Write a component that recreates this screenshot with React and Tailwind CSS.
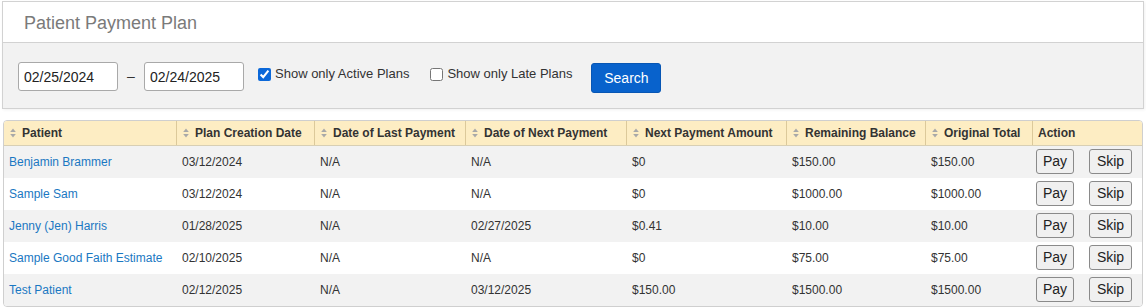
import { useState } from "react";

const rows = [
  { name: "Benjamin Brammer", created: "03/12/2024", last: "N/A", next: "N/A", amount: "$0", remaining: "$150.00", total: "$150.00" },
  { name: "Sample Sam", created: "03/12/2024", last: "N/A", next: "N/A", amount: "$0", remaining: "$1000.00", total: "$1000.00" },
  { name: "Jenny (Jen) Harris", created: "01/28/2025", last: "N/A", next: "02/27/2025", amount: "$0.41", remaining: "$10.00", total: "$10.00" },
  { name: "Sample Good Faith Estimate", created: "02/10/2025", last: "N/A", next: "N/A", amount: "$0", remaining: "$75.00", total: "$75.00" },
  { name: "Test Patient", created: "02/12/2025", last: "N/A", next: "03/12/2025", amount: "$150.00", remaining: "$1500.00", total: "$1500.00" },
];

const columns = [
  { label: "Patient", w: "w-[173px]" },
  { label: "Plan Creation Date", w: "w-[138px]" },
  { label: "Date of Last Payment", w: "w-[151px]" },
  { label: "Date of Next Payment", w: "w-[161px]" },
  { label: "Next Payment Amount", w: "w-[160px]" },
  { label: "Remaining Balance", w: "w-[139px]" },
  { label: "Original Total", w: "w-[107px]" },
];

function SortIcon() {
  return (
    <svg width="6" height="10" viewBox="0 0 6 10" className="shrink-0">
      <path d="M3 0.5 L5.8 4 H0.2 Z" fill="#a8a8a8" />
      <path d="M3 9.5 L5.8 6 H0.2 Z" fill="#a8a8a8" />
    </svg>
  );
}

export default function App() {
  const [active, setActive] = useState(true);
  const [late, setLate] = useState(false);

  return (
    <div className="px-[2px] pt-[1px] font-['Liberation_Sans',Arial,sans-serif] text-[#333]">
      {/* Filter panel */}
      <div className="w-[1142px] border border-[#d2d2d2] shadow-[1px_1px_3px_rgba(0,0,0,0.06)]">
        <div className="h-[41px] bg-white border-b border-[#d2d2d2] pl-[21px] pt-[10px] text-[18px] leading-[22px] font-light text-[#7a7a7a]">
          Patient Payment Plan
        </div>
        <div className="h-[65px] bg-[#f2f2f2] flex items-start pl-[15px] pt-[19px]">
          <input
            defaultValue="02/25/2024"
            className="w-[100px] h-[29px] bg-white border border-[#a9a9a9] rounded-[3px] px-[5px] text-[14px] text-[#222] outline-none"
          />
          <span className="w-[26px] h-[29px] flex items-center justify-center text-[14px] text-[#333]">–</span>
          <input
            defaultValue="02/24/2025"
            className="w-[100px] h-[29px] bg-white border border-[#a9a9a9] rounded-[3px] px-[5px] text-[14px] text-[#222] outline-none"
          />
          <label className="flex items-center h-[24px] ml-[14px] text-[13px] text-[#333]">
            <input
              type="checkbox"
              checked={active}
              onChange={() => setActive(!active)}
              className="w-[13px] h-[13px] m-0 mr-[4px] accent-[#0b68d9]"
            />
            Show only Active Plans
          </label>
          <label className="flex items-center h-[24px] ml-[21px] text-[13px] text-[#333]">
            <input
              type="checkbox"
              checked={late}
              onChange={() => setLate(!late)}
              className="w-[13px] h-[13px] m-0 mr-[4px] accent-[#0b68d9]"
            />
            Show only Late Plans
          </label>
          <button className="ml-[19px] mt-[1px] w-[70px] h-[30px] bg-[#0862cc] border border-[#0756b4] rounded-[3px] text-white text-[14px]">
            Search
          </button>
        </div>
      </div>

      {/* Table */}
      <div className="mt-[11px] ml-[1px] w-[1140px] border border-[#cfcfcf] rounded-[4px] overflow-hidden">
        <div className="flex h-[25px] bg-[#fdedc3] border-b border-[#d8cfb4]">
          {columns.map((c) => (
            <div
              key={c.label}
              className={`${c.w} flex items-center gap-[6px] pl-[6px] border-r border-[#dcc99a] text-[12px] font-bold text-[#333]`}
            >
              <SortIcon />
              {c.label}
            </div>
          ))}
          <div className="flex-1 flex items-center pl-[5px] text-[12px] font-bold text-[#333]">Action</div>
        </div>
        {rows.map((r, i) => (
          <div
            key={r.name}
            className={`flex h-[32px] items-center text-[12px] ${i % 2 === 0 ? "bg-[#f2f2f2]" : "bg-white"}`}
          >
            <div className="w-[173px] pl-[5px] text-[#1a78c2]">{r.name}</div>
            <div className="w-[138px] pl-[5px]">{r.created}</div>
            <div className="w-[151px] pl-[5px]">{r.last}</div>
            <div className="w-[161px] pl-[5px]">{r.next}</div>
            <div className="w-[160px] pl-[5px]">{r.amount}</div>
            <div className="w-[139px] pl-[5px]">{r.remaining}</div>
            <div className="w-[107px] pl-[5px]">{r.total}</div>
            <div className="flex-1 flex items-center gap-[15px] pl-[3px] -mt-[1px]">
              <button className="w-[38px] h-[25px] bg-[#f0f0f0] border border-[#8a8a8a] rounded-[3px] text-[14px] text-[#222]">
                Pay
              </button>
              <button className="w-[43px] h-[25px] bg-[#f0f0f0] border border-[#8a8a8a] rounded-[3px] text-[14px] text-[#222]">
                Skip
              </button>
            </div>
          </div>
        ))}
      </div>
    </div>
  );
}
